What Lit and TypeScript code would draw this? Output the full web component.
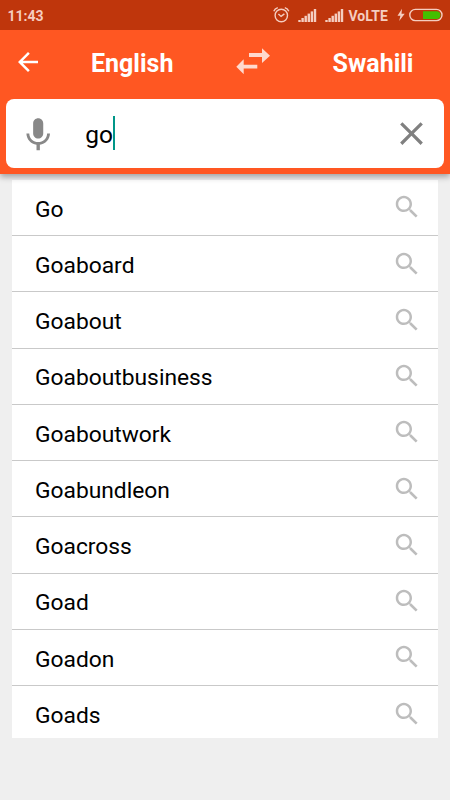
import { LitElement, html, css, svg } from "lit";
import { customElement, property } from "lit/decorators.js";

@customElement("status-bar")
class StatusBar extends LitElement {
  static styles = css`
    :host { display: flex; height: 30px; background: #bf360c; color: #f5cdc0; font: 700 14px Roboto, sans-serif; align-items: center; padding: 0 7px 0 7.5px; }
    .time { flex: 1; line-height: 30px; padding-top: 1px; }
    .alarm { margin-right: 8px; }
    .bars { margin-right: 7.5px; }
    .bars + .bars { margin-right: 5px; }
    .net { width: 42.5px; line-height: 30px; padding-top: 1px; }
    .bolt { margin: 0 4px 0 6px; }
    svg { display: block; }
  `;
  bars() {
    const heights = [2, 4, 6.2, 8.4, 10.6, 13];
    return html`<svg class="bars" width="19" height="30" viewBox="0 0 19 30" fill="currentColor">
      ${heights.map((h, i) => svg`<rect x=${0.3 + i * 3.1} y=${22 - h} width="2.4" height=${h}></rect>`)}
    </svg>`;
  }
  render() {
    return html`
      <span class="time">11:43</span>
      <svg class="alarm" width="17" height="30" viewBox="0 0 17 30" fill="none" stroke="currentColor" stroke-width="1.4">
        <circle cx="8.3" cy="15.5" r="6.2"></circle>
        <path d="M.8 11.2Q1.8 8.5 4.8 7.6M15.8 11.2Q14.8 8.5 11.8 7.6M5.4 13.9L8.1 16.4L11.4 13.9"></path>
      </svg>
      ${this.bars()}${this.bars()}
      <span class="net">VoLTE</span>
      <svg class="bolt" width="8" height="30" viewBox="0 0 8 30" fill="currentColor"><path d="M5 8.8L.5 15.7H3.4L2.2 21L7.7 13.8H4.5Z"></path></svg>
      <svg width="34" height="30" viewBox="0 0 34 30">
        <path d="M14 11.2h13.5a3.9 3.9 0 0 1 0 7.8H14z" fill="#43c000"></path>
        <rect x=".8" y="9.4" width="32.2" height="11.2" rx="5.6" fill="none" stroke="currentColor" stroke-width="1.4"></rect>
      </svg>`;
  }
}

@customElement("suggestion-row")
class SuggestionRow extends LitElement {
  @property() word = "";
  static styles = css`
    :host { box-sizing: border-box; display: flex; justify-content: space-between; height: 56.25px; padding: 0 15.6px 0 22.6px; border-bottom: 1px solid #c9c9c9; }
    .word { font: 400 22.8px/56px Roboto, sans-serif; color: #000; padding-top: 1.75px; }
    .icon { display: block; margin-top: 12.7px; }
  `;
  render() {
    return html`<span class="word">${this.word}</span>
      <svg class="icon" width="30" height="30" viewBox="0 0 24 24" fill="#bdbdbd"><path d="M15.5 14h-.79l-.28-.27C15.41 12.59 16 11.11 16 9.5 16 5.91 13.09 3 9.5 3S3 5.91 3 9.5 5.91 16 9.5 16c1.61 0 3.09-.59 4.23-1.57l.27.28v.79l5 4.99L20.49 19l-4.99-5zm-6 0C7.01 14 5 11.99 5 9.5S7.01 5 9.5 5 14 7.01 14 9.5 11.99 14 9.5 14z"></path></svg>`;
  }
}

@customElement("app-root")
class AppRoot extends LitElement {
  words = ["Go", "Goaboard", "Goabout", "Goaboutbusiness", "Goaboutwork", "Goabundleon", "Goacross", "Goad", "Goadon", "Goads"];
  static styles = css`
    :host { display: block; width: 450px; height: 800px; overflow: hidden; background: #efefef; font-family: Roboto, sans-serif; }
    svg { display: block; }
    .header { position: relative; z-index: 1; box-sizing: border-box; height: 173.5px; background: #ff5722; box-shadow: 0 3px 6px rgba(0, 0, 0, 0.32); }
    .languages { display: flex; align-items: center; height: 68.5px; color: #fff; font: 700 25px/30px Roboto, sans-serif; }
    .back { margin: -5.5px 0 0 13px; }
    .from { width: 96px; margin: -1px 49px 0 48px; }
    .swap { margin-top: -7px; }
    .to { margin: -1px 0 0 62.5px; }
    .search { box-sizing: border-box; display: flex; align-items: center; height: 69px; margin: 0 6px; padding: 0 13px; border-radius: 8px; background: #fff; }
    .mic { margin: 4px 26.4px 0 -0.6px; }
    .query { font-size: 24.5px; line-height: 34px; color: #000; padding-top: 3px; }
    .caret { width: 2.5px; height: 34px; background: #009688; }
    .clear { margin-left: auto; }
    .list { height: 558px; margin: 6.25px 12.4px 0; overflow: hidden; background: #fff; }
  `;
  render() {
    return html`
      <div class="header">
        <status-bar></status-bar>
        <div class="languages">
          <svg class="back" width="30" height="30" viewBox="0 0 24 24" fill="#fff"><path d="M20 11H7.83l5.59-5.59L12 4l-8 8 8 8 1.41-1.41L7.83 13H20v-2z"></path></svg>
          <span class="from">English</span>
          <svg class="swap" width="34" height="26" viewBox="0 0 34 26" fill="#ffd9ce"><path d="M13 5h13V.3L34 7.7 26 15.1V9H13zM21.3 16.8H7.7V11.2L.3 18.7 7.7 26.2V20.6H21.3z"></path></svg>
          <span class="to">Swahili</span>
        </div>
        <div class="search">
          <svg class="mic" width="40.4" height="40.4" viewBox="0 0 24 24" fill="#888"><path d="M12 14c1.66 0 2.99-1.34 2.99-3L15 5c0-1.66-1.34-3-3-3S9 3.34 9 5v6c0 1.66 1.34 3 3 3zm5.3-3c0 3-2.54 5.1-5.3 5.1S6.7 14 6.7 11H5c0 3.41 2.72 6.23 6 6.72V21h2v-3.28c3.28-.48 6-3.3 6-6.72h-1.7z"></path></svg>
          <span class="query">go</span><span class="caret"></span>
          <svg class="clear" width="39" height="39" viewBox="0 0 24 24" fill="#808080"><path d="M19 6.41L17.59 5 12 10.59 6.41 5 5 6.41 10.59 12 5 17.59 6.41 19 12 13.41 17.59 19 19 17.59 13.41 12z"></path></svg>
        </div>
      </div>
      <div class="list">${this.words.map((w) => html`<suggestion-row .word=${w}></suggestion-row>`)}</div>`;
  }
}
